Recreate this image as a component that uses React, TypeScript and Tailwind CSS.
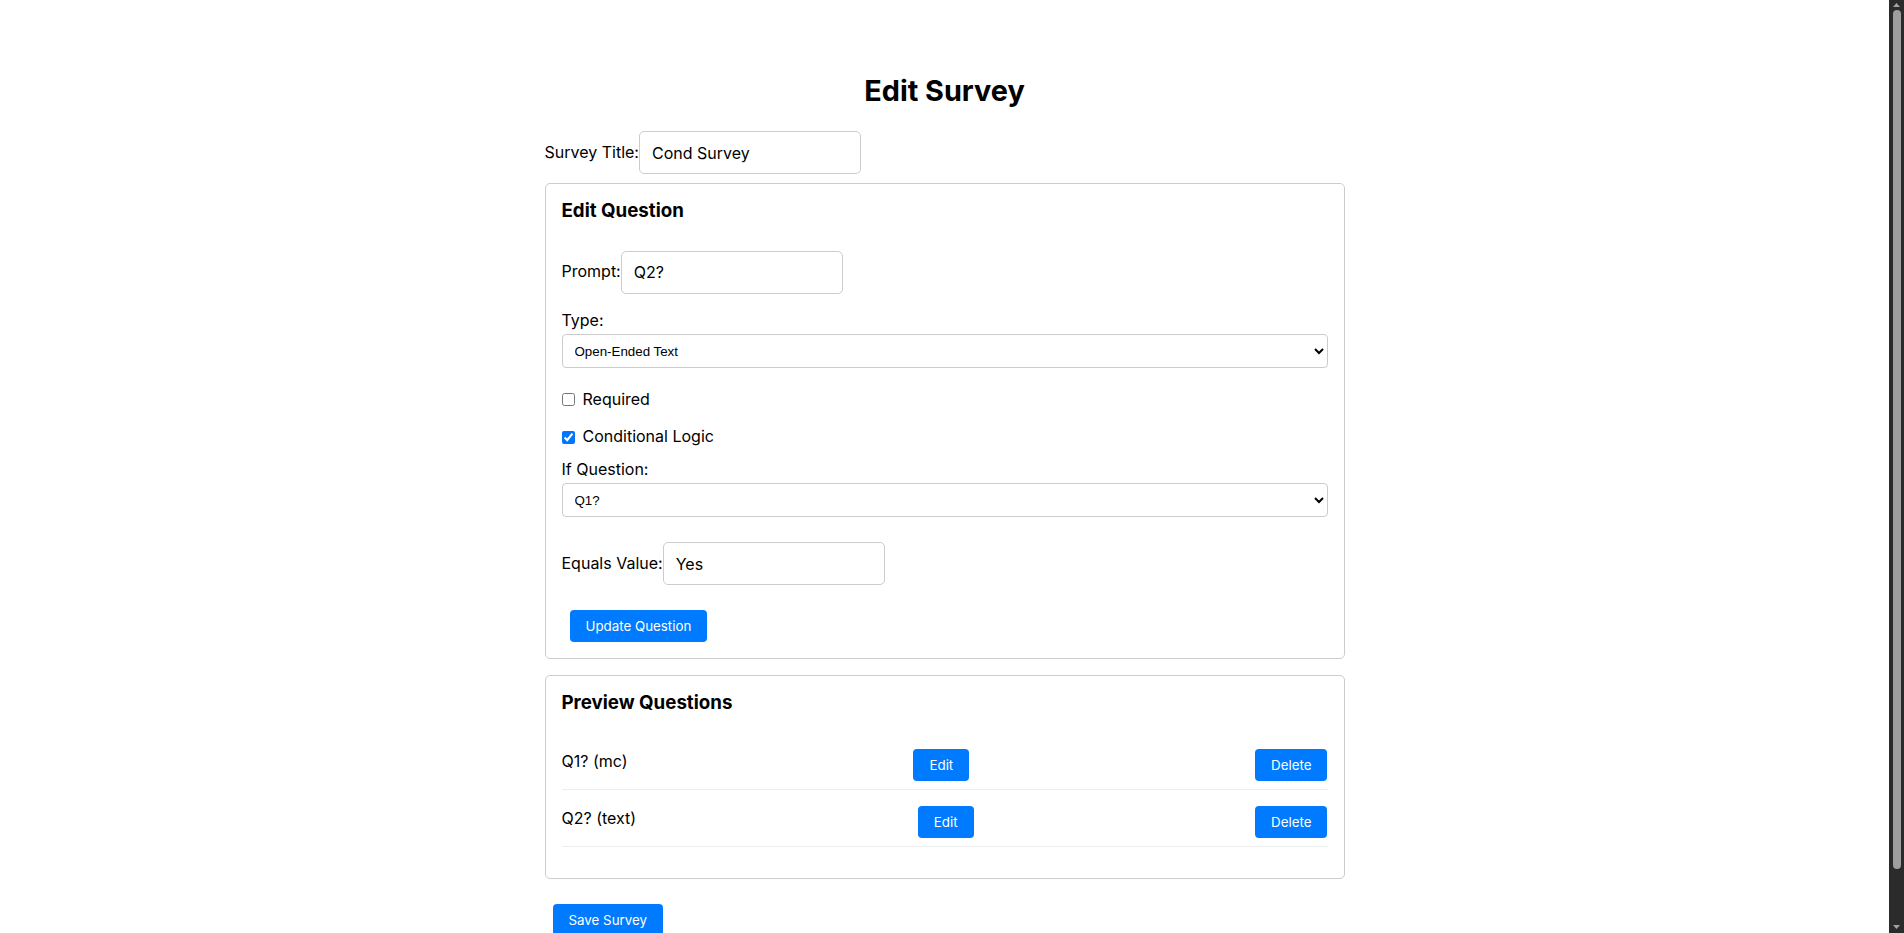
import React from "react";

function Btn({ children, className = "" }: { children: React.ReactNode; className?: string }) {
  return (
    <button
      className={
        "h-[32px] px-4 bg-[#007bff] text-white text-[13.33px] leading-[16px] rounded-[4px] shrink-0 [font-family:Inter,sans-serif] " +
        className
      }
    >
      {children}
    </button>
  );
}

function FakeScrollbar() {
  return (
    <div className="fixed top-0 right-0 w-[15px] h-screen bg-[#2b2b2b] flex flex-col items-center">
      <div className="h-[10px] w-full flex items-center justify-center">
        <svg width="9" height="6" viewBox="0 0 9 6">
          <path d="M4.5 1 L8 5 L1 5 Z" fill="#a3a3a3" />
        </svg>
      </div>
      <div className="h-[859px] w-[8px] rounded-full bg-[#9f9f9f]" />
      <div className="flex-1" />
      <div className="h-[12px] w-full flex items-center justify-center">
        <svg width="9" height="6" viewBox="0 0 9 6">
          <path d="M1 1 L8 1 L4.5 5 Z" fill="#a3a3a3" />
        </svg>
      </div>
    </div>
  );
}

export default function App() {
  return (
    <div className="min-h-screen bg-white text-black pr-[15px] [font-family:Inter,sans-serif]">
      <div className="w-[800px] mx-auto pt-[73px] pb-[48px]">
        <h1 className="text-center text-[28.8px] font-bold leading-[35px]">Edit Survey</h1>

        <div className="mt-[23px] flex items-center h-[43px]">
          <label className="text-[16px] leading-[1.21]">Survey Title:</label>
          <input
            className="w-[222px] h-[43px] px-3 border border-[#ccc] rounded-[5px] text-[16px] bg-white outline-none"
            defaultValue="Cond Survey"
          />
        </div>

        <div className="mt-[9px] border border-[#ccc] rounded-[5px] p-4">
          <h3 className="text-[18.72px] font-bold leading-[1.21]">Edit Question</h3>

          <div className="mt-[28px] flex items-center h-[43px]">
            <label className="text-[16px] leading-[1.21]">Prompt:</label>
            <input
              className="w-[222px] h-[43px] px-3 border border-[#ccc] rounded-[5px] text-[16px] bg-white outline-none"
              defaultValue="Q2?"
            />
          </div>

          <div className="mt-[17px] text-[16px] leading-[1.21]">Type:</div>
          <select
            className="mt-[4px] block w-full h-[34px] pl-2 border border-[#ccc] rounded-[4px] bg-white text-[13.33px] [font-family:'Liberation_Sans',Arial,sans-serif]"
            defaultValue="text"
          >
            <option value="mc">Multiple Choice</option>
            <option value="text">Open-Ended Text</option>
          </select>

          <label className="mt-[22px] flex items-center text-[16px] leading-[1.21]">
            <input type="checkbox" className="m-0 mr-2 w-[13px] h-[13px]" />
            Required
          </label>

          <label className="mt-[18px] flex items-center text-[16px] leading-[1.21]">
            <input type="checkbox" defaultChecked className="m-0 mr-2 w-[13px] h-[13px]" />
            Conditional Logic
          </label>

          <div className="mt-[13px] text-[16px] leading-[1.21]">If Question:</div>
          <select
            className="mt-[4px] block w-full h-[34px] pl-2 border border-[#ccc] rounded-[4px] bg-white text-[13.33px] [font-family:'Liberation_Sans',Arial,sans-serif]"
            defaultValue="q1"
          >
            <option value="q1">Q1?</option>
          </select>

          <div className="mt-[25px] flex items-center h-[43px]">
            <label className="text-[16px] leading-[1.21]">Equals Value:</label>
            <input
              className="w-[222px] h-[43px] px-3 border border-[#ccc] rounded-[5px] text-[16px] bg-white outline-none"
              defaultValue="Yes"
            />
          </div>

          <div className="mt-[25px] flex">
            <Btn className="ml-2">Update Question</Btn>
          </div>
        </div>

        <div className="mt-[16px] border border-[#ccc] rounded-[5px] px-4 pt-4 pb-4">
          <h3 className="text-[18.72px] font-bold leading-[1.21]">Preview Questions</h3>
          <ul className="mt-[18.5px] mb-[15px]">
            <li className="flex justify-between items-center py-2 border-b border-[#eee]">
              <span className="text-[16px] leading-[1.21]">Q1? (mc)</span>
              <Btn className="mt-2">Edit</Btn>
              <Btn className="mt-2">Delete</Btn>
            </li>
            <li className="flex justify-between items-center py-2 border-b border-[#eee]">
              <span className="text-[16px] leading-[1.21]">Q2? (text)</span>
              <Btn className="mt-2">Edit</Btn>
              <Btn className="mt-2">Delete</Btn>
            </li>
          </ul>
        </div>

        <div className="mt-[25px] flex">
          <Btn className="ml-2">Save Survey</Btn>
        </div>
      </div>
      <FakeScrollbar />
    </div>
  );
}
